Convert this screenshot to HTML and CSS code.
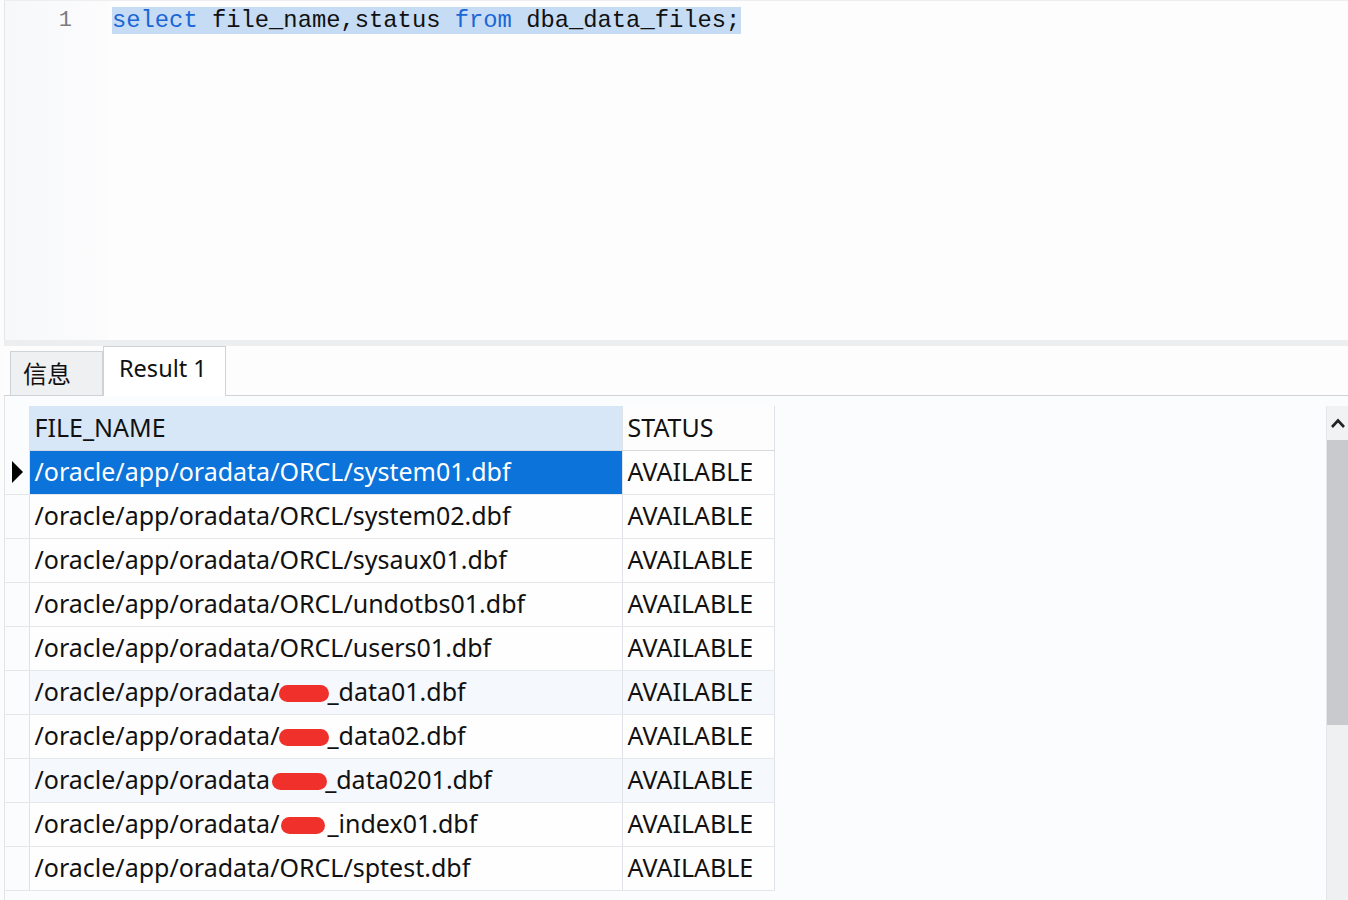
FILE: index.html
```html
<!DOCTYPE html>
<html>
<head>
<meta charset="utf-8">
<link rel="stylesheet" href="styles.css">
</head>
<body>
<div class="app">
  <div class="editor">
    <div class="gutter"><span class="lineno">1</span></div>
    <div class="code"><span class="sel"><span class="kw">select</span> file_name,status <span class="kw">from</span> dba_data_files;</span></div>
  </div>
  <div class="splitter"></div>
  <div class="tabs">
    <div class="tab tab-info">信息</div>
    <div class="tab tab-active">Result 1</div>
  </div>
  <div class="results">
    <table class="grid">
      <thead>
        <tr>
          <th class="rh"></th>
          <th class="c1 hsel">FILE_NAME</th>
          <th class="c2">STATUS</th>
        </tr>
      </thead>
      <tbody>
        <tr><td class="rh"><span class="arrow"></span></td><td class="c1 cur">/oracle/app/oradata/ORCL/system01.dbf</td><td class="c2">AVAILABLE</td></tr>
        <tr><td class="rh"></td><td class="c1">/oracle/app/oradata/ORCL/system02.dbf</td><td class="c2">AVAILABLE</td></tr>
        <tr><td class="rh"></td><td class="c1">/oracle/app/oradata/ORCL/sysaux01.dbf</td><td class="c2">AVAILABLE</td></tr>
        <tr><td class="rh"></td><td class="c1">/oracle/app/oradata/ORCL/undotbs01.dbf</td><td class="c2">AVAILABLE</td></tr>
        <tr><td class="rh"></td><td class="c1">/oracle/app/oradata/ORCL/users01.dbf</td><td class="c2">AVAILABLE</td></tr>
        <tr class="alt"><td class="rh"></td><td class="c1">/oracle/app/oradata/<span class="redact"></span>_data01.dbf</td><td class="c2">AVAILABLE</td></tr>
        <tr><td class="rh"></td><td class="c1">/oracle/app/oradata/<span class="redact"></span>_data02.dbf</td><td class="c2">AVAILABLE</td></tr>
        <tr class="alt"><td class="rh"></td><td class="c1">/oracle/app/oradata<span class="redact r2"></span>_data0201.dbf</td><td class="c2">AVAILABLE</td></tr>
        <tr><td class="rh"></td><td class="c1">/oracle/app/oradata/<span class="redact r3"></span>_index01.dbf</td><td class="c2">AVAILABLE</td></tr>
        <tr><td class="rh"></td><td class="c1">/oracle/app/oradata/ORCL/sptest.dbf</td><td class="c2">AVAILABLE</td></tr>
      </tbody>
    </table>
    <div class="vscroll">
      <div class="sbtn">
        <svg width="16" height="12" viewBox="0 0 16 12"><path d="M2 10 L8 3.5 L14 10" fill="none" stroke="#222" stroke-width="2.6"/></svg>
      </div>
      <div class="thumb"></div>
      <div class="track"></div>
    </div>
  </div>
</div>
</body>
</html>
```

FILE: styles.css
```css
html, body {
  margin: 0;
  padding: 0;
  background: #fcfcfd;
}
.app {
  width: 1348px;
  height: 900px;
  display: flex;
  flex-direction: column;
  overflow: hidden;
  font-family: "Noto Sans", "Noto Sans CJK SC", sans-serif;
  color: #111;
}
.editor {
  height: 340px;
  display: flex;
  margin-left: 4px;
  border-left: 1px solid #e4e6ea;
  border-top: 1px solid #eceef0;
  background: #fdfdfe;
  box-sizing: border-box;
}
.gutter {
  width: 103px;
  background: linear-gradient(to right, #f7f8fa, #fcfcfd);
  text-align: right;
  box-sizing: border-box;
  padding-right: 36px;
  padding-top: 7px;
}
.lineno {
  font-family: "Liberation Mono", "DejaVu Sans Mono", monospace;
  font-size: 22px;
  color: #7a7c80;
  line-height: 26px;
}
.code {
  padding-top: 6px;
  padding-left: 4px;
  font-family: "Liberation Mono", "DejaVu Sans Mono", monospace;
  font-size: 23.8px;
  line-height: 27px;
  color: #111;
  white-space: pre;
}
.sel {
  background: #c6dcf4;
  display: inline-block;
  padding-right: 1px;
}
.kw {
  color: #1a66d6;
}
.splitter {
  height: 6px;
  background: #eceef0;
  margin-left: 4px;
}
.tabs {
  height: 50px;
  display: flex;
  align-items: flex-end;
  padding-left: 6px;
  border-bottom: 1px solid #cfd2d6;
  margin-left: 4px;
  box-sizing: border-box;
  background: #fdfdfe;
}
.tab {
  box-sizing: border-box;
  border: 1px solid #cfd2d6;
  border-bottom: none;
  display: flex;
  align-items: center;
}
.tab-info {
  width: 93px;
  height: 44px;
  background: #eff0f2;
  padding-left: 12px;
  padding-bottom: 2px;
  font-size: 24px;
  font-family: "Noto Sans CJK SC", sans-serif;
}
.tab-active {
  width: 123px;
  background: #ffffff;
  padding-left: 15px;
  padding-bottom: 8px;
  font-size: 23.5px;
  margin-bottom: -1px;
  height: 50px;
}
.results {
  flex: 1;
  position: relative;
  padding-top: 10px;
  margin-left: 4px;
  border-left: 1px solid #e2e4e8;
  background: #fbfcfd;
}
.grid {
  border-collapse: collapse;
  table-layout: fixed;
  font-size: 25px;
}
.grid th, .grid td {
  height: 44px;
  box-sizing: border-box;
  padding: 0 0 2px 5px;
  text-align: left;
  font-weight: normal;
  white-space: nowrap;
  overflow: hidden;
  border-bottom: 1px solid #e5e7ea;
  line-height: 40px;
}
.grid .rh {
  width: 24px;
  padding: 0;
  border-right: 1px solid #dfe2e6;
  background: #fbfcfd;
}
.grid .c1 {
  width: 593px;
  border-right: 1px solid #dfe2e6;
  background: #fefefe;
}
.grid .c2 {
  width: 152px;
  border-right: 1px solid #dfe2e6;
  background: #fefefe;
}
.grid thead .rh {
  border-bottom: none;
  background: #fbfcfd;
}
.grid th.hsel {
  background: #d7e7f7;
  border-bottom: 1px solid #cfd9e4;
}
.grid th.c2 {
  background: #fdfdfd;
  border-bottom: 1px solid #d6d8dc;
}
.grid tr.alt .c1, .grid tr.alt .c2 {
  background: #f5f8fc;
}
.grid td.cur {
  background: #0b73d9;
  color: #ffffff;
}
.arrow {
  display: block;
  width: 0;
  height: 0;
  margin-left: 7px;
  border-top: 11px solid transparent;
  border-bottom: 11px solid transparent;
  border-left: 11px solid #000;
}
.redact {
  display: inline-block;
  width: 50px;
  height: 17px;
  border-radius: 9px;
  background: #f0302a;
  vertical-align: -1px;
  margin-right: -2px;
}
.redact.r2 {
  width: 55px;
  margin-left: 2px;
}
.redact.r3 {
  width: 44px;
  margin-left: 2px;
  margin-right: 2px;
}
.vscroll {
  position: absolute;
  right: 0;
  top: 10px;
  bottom: 0;
  width: 21px;
  display: flex;
  flex-direction: column;
  background: #eef0f2;
  border-left: 1px solid #e4e6e9;
}
.sbtn {
  height: 34px;
  display: flex;
  align-items: center;
  justify-content: center;
  background: #f1f2f4;
}
.thumb {
  height: 285px;
  background: #c9cacd;
}
.track {
  flex: 1;
}
```
